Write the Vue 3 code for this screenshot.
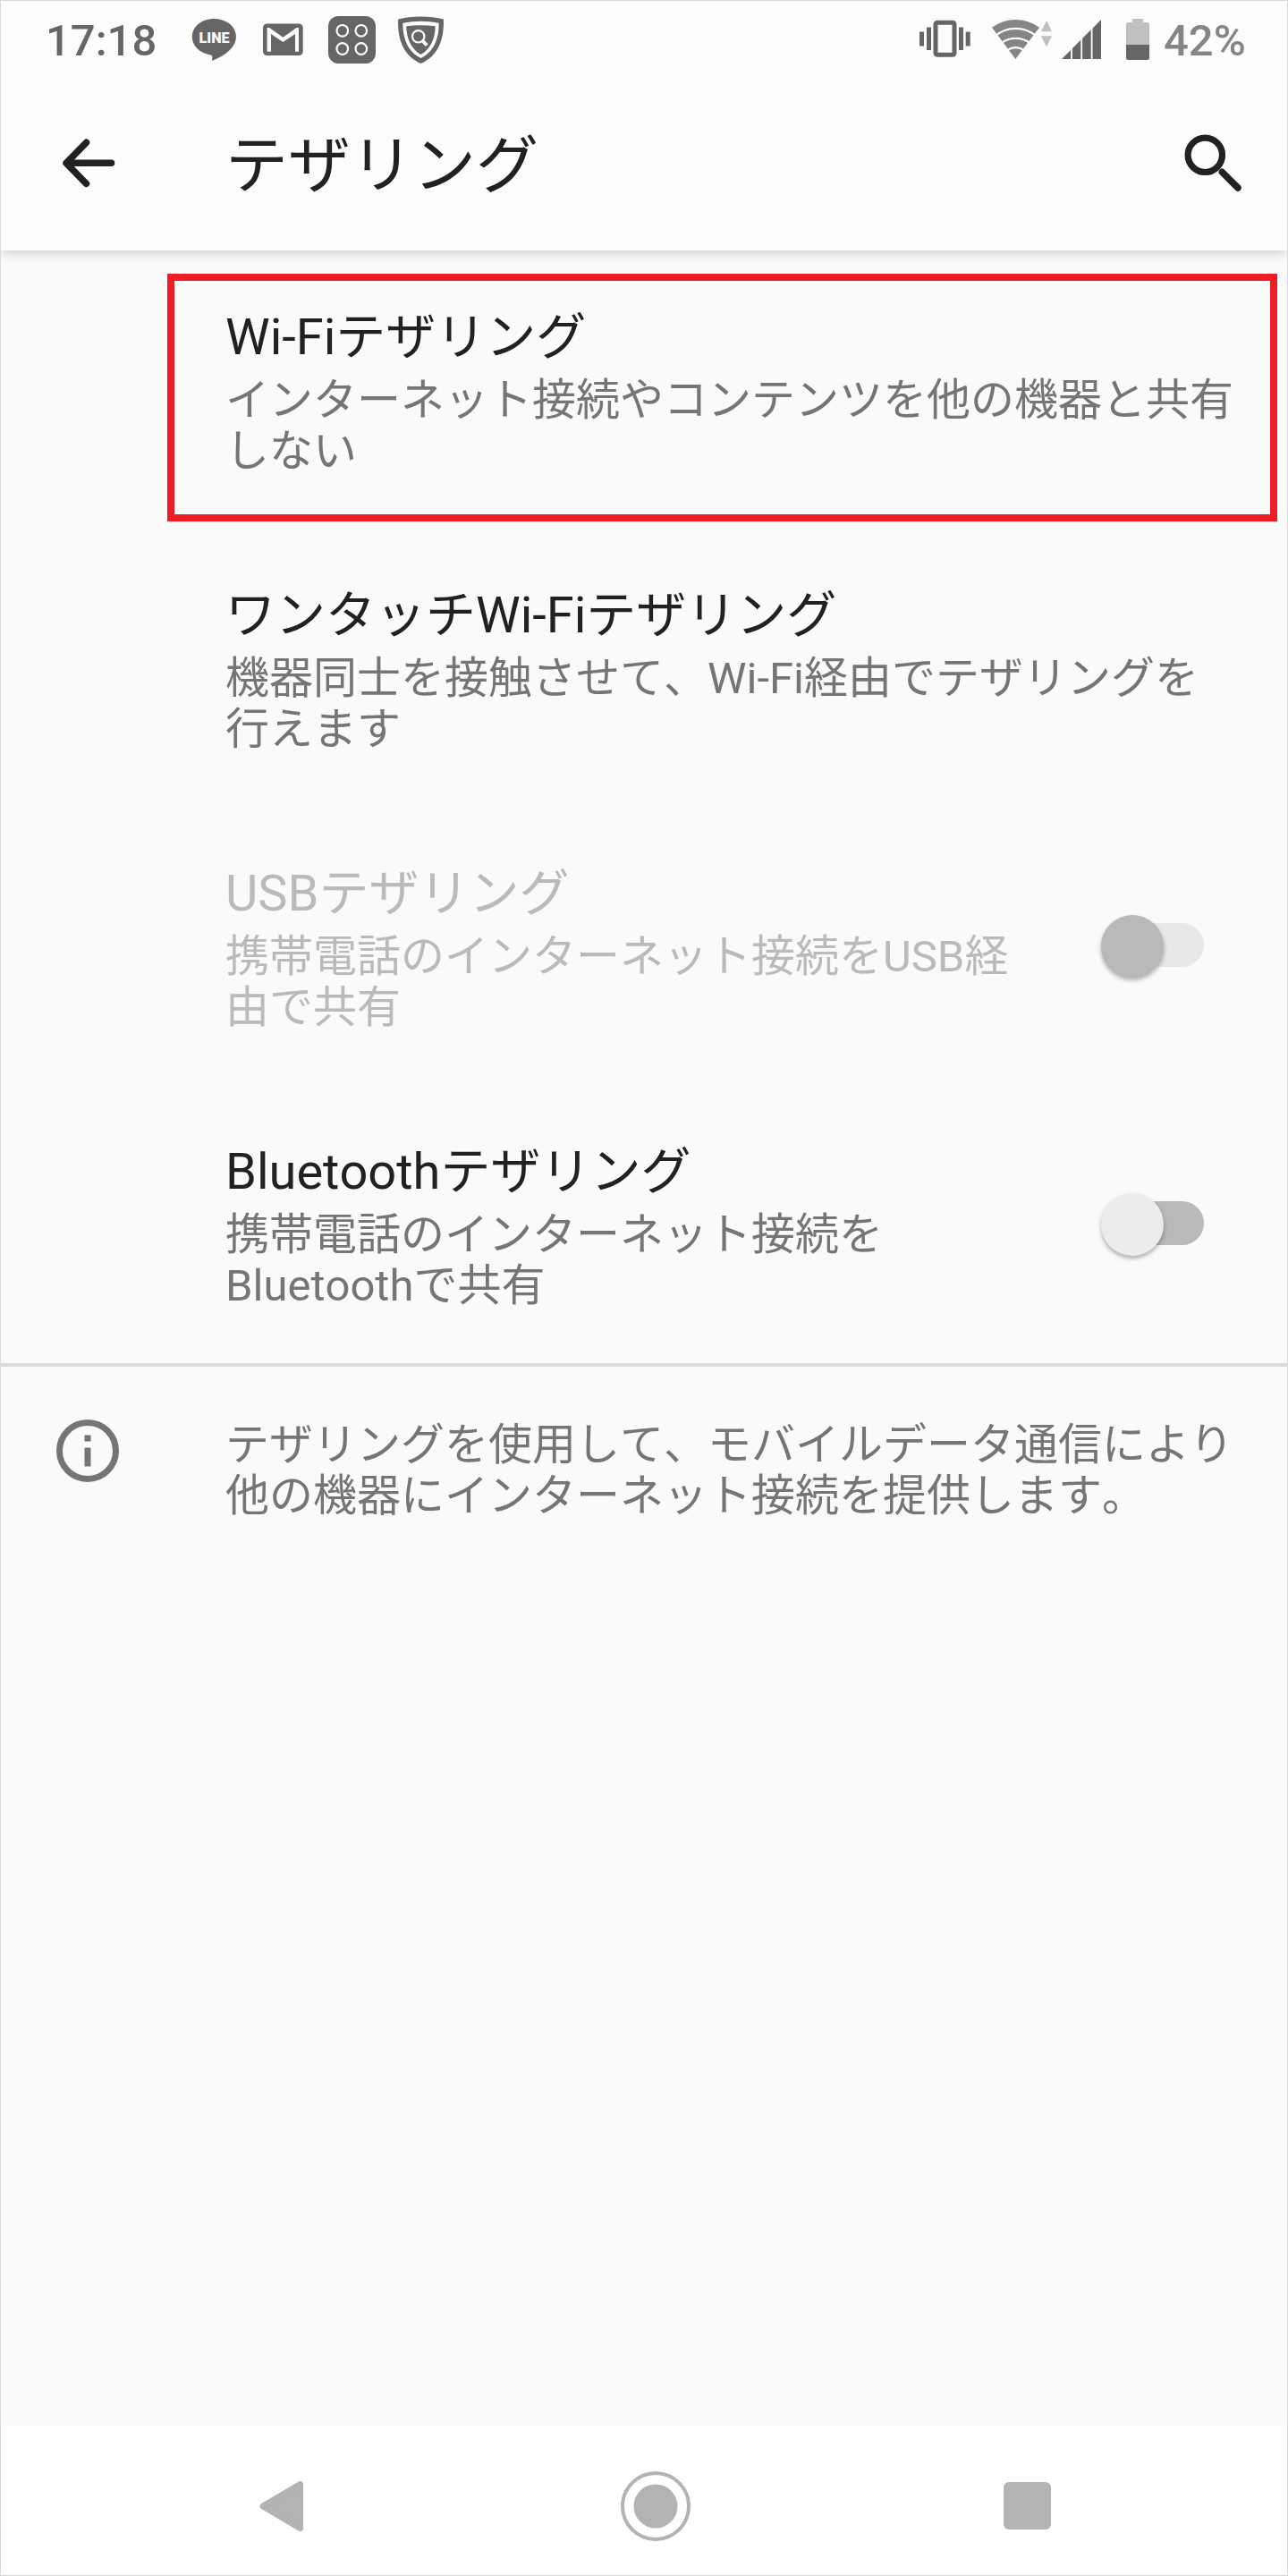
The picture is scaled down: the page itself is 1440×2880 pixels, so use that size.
<script setup>
import { ref } from 'vue';

const items = ref([
  {
    id: 'wifi',
    title: 'Wi-Fiテザリング',
    summary: ['インターネット接続やコンテンツを他の機器と共有', 'しない'],
    highlighted: true
  },
  {
    id: 'onetouch',
    title: 'ワンタッチWi-Fiテザリング',
    summary: ['機器同士を接触させて、Wi-Fi経由でテザリングを', '行えます']
  },
  {
    id: 'usb',
    title: 'USBテザリング',
    summary: ['携帯電話のインターネット接続をUSB経', '由で共有'],
    toggle: true,
    disabled: true
  },
  {
    id: 'bluetooth',
    title: 'Bluetoothテザリング',
    summary: ['携帯電話のインターネット接続を', 'Bluetoothで共有'],
    toggle: true
  }
]);

const note = ['テザリングを使用して、モバイルデータ通信により', '他の機器にインターネット接続を提供します。'];
</script>

<template>
  <div class="screen">
    <header class="top">
      <div class="status-bar">
        <span class="clock">17:18</span>
        <div class="notifications">
          <!-- LINE -->
          <svg width="56" height="56" viewBox="0 0 56 56">
            <path d="M28.3 5C14.7 5 3.8 13.6 3.8 25.2c0 10 8.2 17.800 20.4 20.2 2.2.5 2.500 1.5 1.800 6.600C39 47 52.900 37.500 52.900 25.200 52.900 13.600 41.900 5 28.300 5z" fill="#666" />
            <text x="28.500" y="31.800" text-anchor="middle" textLength="34" lengthAdjust="spacingAndGlyphs" class="line-label">LINE</text>
          </svg>
          <!-- Gmail -->
          <svg width="56" height="56" viewBox="0 0 56 56">
            <rect x="6" y="10.5" width="44.7" height="35.5" rx="4.5" fill="#666" />
            <path d="M10.600 15h2.600l15.200 10.800L43.500 15h2.500v26.800h-4V22L28.400 31 15 22v19.800h-4.400z" fill="#fcfcfc" />
          </svg>
          <svg width="56" height="56" viewBox="0 0 56 56">
            <rect x="2" y="2" width="53" height="53" rx="11.5" fill="#666" />
            <g fill="none" stroke="#fcfcfc" stroke-width="2.2">
              <circle cx="17.8" cy="18.3" r="6.3" />
              <circle cx="38.8" cy="18.3" r="6.3" />
              <circle cx="17.8" cy="38.5" r="6.3" />
              <circle cx="38.8" cy="38.5" r="6.3" />
            </g>
          </svg>
          <!-- Escudo con lupa -->
          <svg width="56" height="56" viewBox="0 0 56 56">
            <path d="M3.200 5.500C18 1.500 39 1.500 53.800 5.500 55 29 47 47 28.500 55 10 47 2 29 3.200 5.500z" fill="#666" />
            <path d="M8.400 9.800C21 7 36 7 48.600 9.800 49 27 43 42 28.500 49 14 42 8 27 8.400 9.800z" fill="#fcfcfc" />
            <path d="M12.300 13.200C23 11.800 34 11.800 44.700 13.200 44.500 27 39.500 38.500 28.500 45 17.500 38.500 12.500 27 12.300 13.200z" fill="#666" />
            <circle cx="25.7" cy="24.8" r="6.7" fill="none" stroke="#fcfcfc" stroke-width="2.2" />
            <path d="M30 29l5.200 5.600" stroke="#fcfcfc" stroke-width="4" />
          </svg>
        </div>
        <div class="indicators">
          <svg width="58" height="56" viewBox="0 0 58 56">
            <g fill="#666">
              <rect x="0" y="19.5" width="5" height="16" />
              <rect x="8" y="14.5" width="5" height="25.5" />
              <rect x="44" y="14.5" width="5" height="25.5" />
              <rect x="51.7" y="19.5" width="5" height="16" />
            </g>
            <rect x="18" y="9.3" width="21" height="36" rx="2" fill="none" stroke="#666" stroke-width="5" />
          </svg>
          <svg class="wifi" width="68" height="56" viewBox="0 0 68 56">
            <path d="M26.300 50L0 14.800A44 44 0 0 1 53 14.800z" fill="#858585" />
            <g fill="none" stroke="#fcfcfc" stroke-width="2.2">
              <path d="M3.500 24.500A35 35 0 0 1 49.500 24.500" />
              <path d="M10 32.500A27 27 0 0 1 43 32.500" />
              <path d="M17 40.500A15 15 0 0 1 36 40.500" />
            </g>
            <path d="M61 7l6 12.300H55zM61 36.500l6-12.300H55z" fill="#c0c0c0" />
          </svg>
          <svg class="signal" width="44" height="56" viewBox="0 0 44 56">
            <path d="M0 50L44 6v44z" fill="#666" />
            <path d="M11 0v52M22.200 0v52M33.600 0v52" stroke="#fcfcfc" stroke-width="1.8" />
          </svg>
          <svg class="battery" width="26" height="56" viewBox="0 0 26 56">
            <path d="M7 5h12v4h4.500a2.500 2.500 0 0 1 2.500 2.500V34H0V11.500A2.500 2.500 0 0 1 2.500 9H7z" fill="#c0c0c0" />
            <path d="M0 34h26v14.500a2.500 2.500 0 0 1-2.500 2.500h-21A2.500 2.500 0 0 1 0 48.500z" fill="#666" />
          </svg>
          <span class="percent">42%</span>
        </div>
      </div>

      <div class="app-bar">
        <svg width="64" height="64" viewBox="0 0 64 64">
          <path d="M29.500 9.300L7 32.300 29.500 55.300M7.500 32.300H57.500" fill="none" stroke="#212121" stroke-width="7.5" stroke-linecap="round" stroke-linejoin="round" />
        </svg>
        <h1>テザリング</h1>
        <svg class="search" width="70" height="70" viewBox="0 0 70 70">
          <circle cx="27.3" cy="26.3" r="19.2" fill="none" stroke="#212121" stroke-width="7.2" />
          <path d="M46.300 45.300L64 63" stroke="#212121" stroke-width="7.5" stroke-linecap="round" />
        </svg>
      </div>
    </header>

    <main class="content">
      <div v-for="item in items" :key="item.id" class="row" :class="{ disabled: item.disabled }">
        <div class="texts">
          <h2>{{ item.title }}</h2>
          <p><span v-for="line in item.summary" :key="line">{{ line }}</span></p>
        </div>
        <div v-if="item.toggle" class="switch">
          <span class="thumb"></span>
        </div>
        <div v-if="item.highlighted" class="highlight"></div>
      </div>

      <div class="info">
        <svg width="70" height="70" viewBox="0 0 70 70">
          <circle cx="35" cy="35" r="31.5" fill="none" stroke="#757575" stroke-width="7" />
          <path d="M31.500 17.500h7v7h-7zM31.500 31.500h7v21h-7z" fill="#757575" />
        </svg>
        <p><span v-for="line in note" :key="line">{{ line }}</span></p>
      </div>
    </main>

    <nav class="nav-bar">
      <svg width="50" height="58" viewBox="0 0 50 58">
        <path d="M4 29L45.500 4.500v49z" fill="#b3b3b3" stroke="#b3b3b3" stroke-width="7" stroke-linejoin="round" />
      </svg>
      <svg class="home" width="80" height="80" viewBox="0 0 80 80">
        <circle cx="40" cy="40" r="37" fill="none" stroke="#b3b3b3" stroke-width="4" />
        <circle cx="40" cy="40" r="24.5" fill="#b3b3b3" />
      </svg>
      <span class="recent"></span>
    </nav>
  </div>
</template>

<style>
body {
  margin: 0;
}
</style>

<style scoped>
.screen {
  width: 1440px;
  height: 2880px;
  box-sizing: border-box;
  border: 1px solid #dadada;
  display: flex;
  flex-direction: column;
  background: #fafafa;
  color: #212121;
  font-family: Roboto, "Noto Sans CJK JP", sans-serif;
  font-kerning: none;
  text-spacing-trim: space-all;
  overflow: hidden;
}

svg {
  display: block;
  flex: none;
}

h1, h2, p {
  margin: 0;
  font-weight: 400;
  white-space: nowrap;
}

p span {
  display: block;
}

/* Cabecera */
.top {
  height: 279px;
  flex: none;
  background: #fcfcfc;
  box-shadow: 0 2px 14px rgba(0, 0, 0, 0.2);
  position: relative;
}

.status-bar {
  height: 83px;
  display: flex;
  align-items: flex-start;
  padding: 15px 47px 0 50px;
  box-sizing: border-box;
  font-size: 49px;
  line-height: 60px;
  font-weight: 500;
}

.clock {
  width: 160px;
  color: #666;
}

.notifications {
  display: flex;
  gap: 21px;
}

.line-label {
  font-size: 16.5px;
  font-weight: 900;
  fill: #fcfcfc;
}

.indicators {
  display: flex;
  margin-left: auto;
}

.wifi {
  margin-left: 23px;
}

.signal {
  margin-left: 10px;
}

.battery {
  margin-left: 28px;
}

.percent {
  width: 91px;
  margin-left: 16px;
  color: #858585;
}

.app-bar {
  height: 196px;
  display: flex;
  align-items: center;
  padding: 0 49px 0 66px;
}

h1 {
  margin-left: 121px;
  padding-top: 8px;
  font-size: 70px;
  line-height: 82px;
}

.search {
  margin-left: auto;
}

/* Lista de ajustes */
.content {
  flex: 1;
}

.row {
  height: 311px;
  box-sizing: border-box;
  padding: 64px 93px 0 251px;
  display: flex;
  justify-content: space-between;
  position: relative;
}

h2 {
  font-size: 56px;
  line-height: 66px;
}

p {
  font-size: 49px;
  line-height: 57px;
  color: #757575;
}

.row p {
  margin-top: 9px;
}

.highlight {
  position: absolute;
  top: 26px;
  left: 186px;
  width: 1241px;
  height: 277px;
  box-sizing: border-box;
  border: 8px solid #ee1c25;
}

.switch {
  width: 109px;
  height: 49px;
  margin-top: 66px;
  border-radius: 25px;
  background: #b9b9b9;
}

.thumb {
  display: block;
  width: 70px;
  height: 70px;
  margin: -9px 0 0 -6px;
  border-radius: 50%;
  background: #ececec;
  box-shadow: 0 3px 5px rgba(0, 0, 0, 0.3);
}

.disabled h2,
.disabled p {
  color: #bababa;
}

.disabled .switch {
  background: #e8e8e8;
}

.disabled .thumb {
  background: #b9b9b9;
}

.info {
  display: flex;
  gap: 119px;
  padding: 59px 0 0 62px;
  border-top: 4px solid #dcdcdc;
}

/* Barra de navegación */
.nav-bar {
  height: 167px;
  flex: none;
  background: #fff;
  display: flex;
  align-items: center;
  justify-content: space-between;
  box-sizing: border-box;
  padding: 12px 264px 0 289px;
}

.home {
  margin-left: 4px;
}

.recent {
  width: 53px;
  height: 53px;
  border-radius: 6px;
  background: #b3b3b3;
}
</style>
